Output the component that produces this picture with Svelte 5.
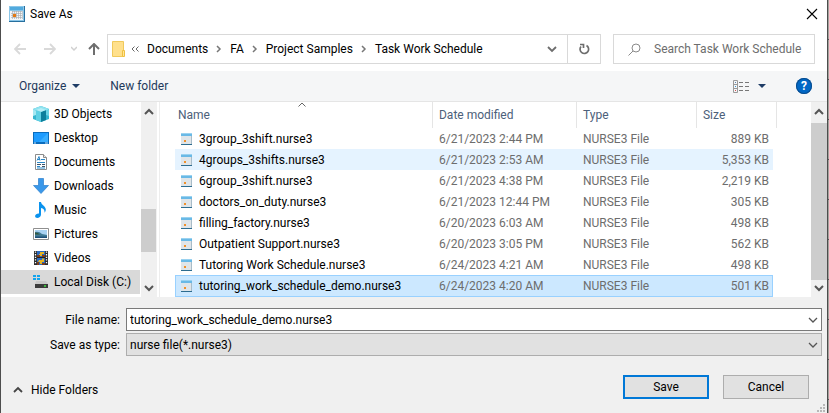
<script>
  const places = [
    { name: '3D Objects', icon: 'cube' },
    { name: 'Desktop', icon: 'desktop' },
    { name: 'Documents', icon: 'document' },
    { name: 'Downloads', icon: 'download' },
    { name: 'Music', icon: 'music' },
    { name: 'Pictures', icon: 'picture' },
    { name: 'Videos', icon: 'video' },
    { name: 'Local Disk (C:)', icon: 'disk' }
  ];
  const crumbs = ['Documents', 'FA', 'Project Samples', 'Task Work Schedule'];
  const files = [
    ['3group_3shift.nurse3', '6/21/2023 2:44 PM', '889 KB'],
    ['4groups_3shifts.nurse3', '6/21/2023 2:53 AM', '5,353 KB'],
    ['6group_3shift.nurse3', '6/21/2023 4:38 PM', '2,219 KB'],
    ['doctors_on_duty.nurse3', '6/21/2023 12:44 PM', '305 KB'],
    ['filling_factory.nurse3', '6/20/2023 6:03 AM', '498 KB'],
    ['Outpatient Support.nurse3', '6/20/2023 3:05 PM', '562 KB'],
    ['Tutoring Work Schedule.nurse3', '6/24/2023 4:21 AM', '498 KB'],
    ['tutoring_work_schedule_demo.nurse3', '6/24/2023 4:20 AM', '501 KB']
  ];
  let place = $state('Local Disk (C:)');
  let selected = $state(7);
  let highlighted = $state(1);
  let fileName = $state('tutoring_work_schedule_demo.nurse3');

  function choose(i) {
    selected = i;
    fileName = files[i][0];
  }
</script>

{#snippet chevron(dir, color, weight)}
  <svg class="chev" width="10" height="10" viewBox="0 0 10 10" fill="none" stroke={color} stroke-width={weight}>
    {#if dir === 'up'}<path d="M1 7 5 3l4 4" />
    {:else if dir === 'down'}<path d="M1 3l4 4 4-4" />
    {:else}<path d="M3 2l3 3-3 3" />{/if}
  </svg>
{/snippet}

{#snippet placeIcon(kind)}
  <svg width="16" height="16" viewBox="0 0 16 16" aria-hidden="true">
    {#if kind === 'cube'}
      <path d="M0 3 8 0l8 3v10l-8 3-8-3z" fill="#35b5cf" />
      <path d="M0 3 8 0l8 3-3 2-5-2-5 2z" fill="#8fe3f0" />
      <path d="M3 4l5 2v10l-5-2z" fill="#5fd0e4" />
      <path d="M8 6l5-2v10l-5 2z" fill="#0e7f9c" />
      <path d="M3 4l5-2 5 2-5 2z" fill="#b5eef6" />
      <path d="M0 3l3 2v4l-3 1z" fill="#a5e8f2" />
      <path d="M13 5l3-2v7l-3-1z" fill="#6bd3e5" />
    {:else if kind === 'desktop'}
      <path d="M0 2h16v12H0z" fill="#0a6cbd" />
      <path d="M1 3h14v9H1z" fill="#1e9cff" />
      <path d="M15 3v9H6z" fill="#38aeff" />
      <path d="M1 13h2M12 13h3" stroke="#bfe3ff" />
    {:else if kind === 'document'}
      <path d="M2.5.5h8l3 3v12h-11z" fill="#fff" stroke="#8b8b8b" />
      <path d="M10.500.5v3h3" fill="#e8e8e8" stroke="#8b8b8b" />
      <path d="M4 6.500l2-4 1 4M5 5.500h2M8 5.500h4M4 8.500h8M4 12.500h3M4 14h8" fill="none" stroke="#2b87c7" />
      <path d="M4 10.500h4M9 10.500h3M9 12.500h3" stroke="#3e5266" />
    {:else if kind === 'download'}
      <path d="M5.500.5h5v7h5L8 15.500.5 7.500h5z" fill="#3a98ea" stroke="#2c80cc" stroke-width=".7" />
    {:else if kind === 'music'}
      <path d="M6 0h2c.3 3 4.500 4 4.800 7.300.1 1.500-.5 2.700-1.300 3.500.4-2.800-1-4.300-3.500-4.800v6.500C8 14.700 6 16 4.300 16 3 16 2 15.200 2.100 14c.2-1.700 2-2.700 3.900-2.500z" fill="#0b93ee" />
    {:else if kind === 'picture'}
      <path d="M.5 2.500h15v11H.5z" fill="#fff" stroke="#8f8f8f" />
      <path d="M2 4h12v8H2z" fill="#a9d2f2" />
      <path d="M2 6q4-1 7 2l5 1v3H2z" fill="#417a95" />
      <path d="M2 6.500q3 0 5 2H2z" fill="#33593f" />
      <path d="M2 10.500h12V12H2z" fill="#1f5079" />
    {:else if kind === 'video'}
      <path d="M1 1h14v14H1z" fill="#2d2d2d" />
      <path d="M4 1h8v14H4z" fill="#2b6ac0" />
      <path d="M2.500 1.500v13M13.500 1.500v13" stroke="#fff" stroke-width="1.300" stroke-dasharray="1.300 1.300" />
      <path d="M4 7.500h8" stroke="#222" />
      <path d="M7 2h4v2H9v2H6V4h1zM6 10h3V8.500h2V12H9v2H7v-2H5z" fill="#e6b422" />
      <path d="M4 5h3v2H4zM4 12h2v3H4zM9 5h3v2H9zM9 13h3v2H9z" fill="#7b3c1c" />
    {:else}
      <path d="M0 1h3v2H0zM4 1h3v2H4zM0 4h3v2H0zM4 4h3v2H4z" fill="#13a5ee" />
      <path d="M3 7h10l2 3H2z" fill="#c9c9c9" />
      <path d="M2 10h13v4H2z" fill="#3b3b3b" />
      <path d="M11 12h2" stroke="#3fe33f" stroke-width="1.500" />
    {/if}
  </svg>
{/snippet}

<div class="screen">
  <div class="window" role="dialog" aria-label="Save As">
    <header class="title">
      <svg width="16" height="16" viewBox="0 0 16 16" aria-hidden="true">
        <path d="M0 0h16v16H0z" fill="#276f9e" />
        <path d="M0 0h15v15H0z" fill="#8bc6e8" />
        <path d="M1 1h13v3H1z" fill="#51aade" />
        <path d="M1 5h13v9H1z" fill="#f5f7f8" />
        <path d="M3 5.500h10M2 7.500h11M2 9.500h11M2 11.500h11M3.500 5v8M5.500 5v8M7.500 5v8M9.500 5v8M11.500 5v8M13.500 5v8" stroke="#a4a9ae" stroke-width=".6" />
        <path d="M4 8h3v3H4z" fill="#e47911" />
      </svg>
      <span>Save As</span>
      <button class="close" aria-label="Close">
        <svg width="12" height="12" viewBox="0 0 12 12" stroke="#000" stroke-width="1.100"><path d="M1 1l10 10M11 1 1 11" /></svg>
      </button>
    </header>

    <nav class="address-row">
      <div class="history">
        <button aria-label="Back"><svg width="12" height="12" viewBox="0 0 12 12" fill="none" stroke="#d9d9d9" stroke-width="1.800"><path d="M12 6H1M6 1 1 6l5 5" /></svg></button>
        <button aria-label="Forward"><svg width="12" height="12" viewBox="0 0 12 12" fill="none" stroke="#d9d9d9" stroke-width="1.800"><path d="M0 6h11M6 1l5 5-5 5" /></svg></button>
        <button class="recent" aria-label="Recent locations"><svg width="6" height="6" viewBox="0 0 6 6" fill="none" stroke="#d0d0d0" stroke-width="1.500"><path d="M0 1l3 3 3-3" /></svg></button>
        <button aria-label="Up"><svg width="12" height="12" viewBox="0 0 12 12" fill="none" stroke="#6e6e6e" stroke-width="2"><path d="M6 12V1M1 6l5-5 5 5" /></svg></button>
      </div>
      <div class="address">
        <svg class="folder" width="13" height="16" viewBox="0 0 13 16" aria-hidden="true">
          <path d="M.5.5h11v15H.5z" fill="#ffe08c" stroke="#f0c95b" />
          <path d="M10.500 9.500h2v6h-2z" fill="#ffe699" stroke="#efc041" />
        </svg>
        <svg class="more" width="8" height="6" viewBox="0 0 8 6" fill="none" stroke="#666" aria-hidden="true"><path d="M3.500.5 1 3l2.500 2.500M7.500.5 5 3l2.500 2.500" /></svg>
        <div class="crumbs">
          {#each crumbs as crumb, i}
            {#if i}{@render chevron('right', '#777', 1.5)}{/if}
            <button>{crumb}</button>
          {/each}
        </div>
        <button class="drop" aria-label="Previous locations">{@render chevron('down', '#6d6d6d', 1.8)}</button>
        <button class="refresh" aria-label="Refresh">
          <svg width="12" height="12" viewBox="0 0 12 12" fill="none" stroke="#6d6d6d" stroke-width="1.700"><path d="M8.500 2.500A4.300 4.300 0 1 1 3 3.500M2 1.500h3.500V5" /></svg>
        </button>
      </div>
      <label class="search">
        <svg width="13" height="13" viewBox="0 0 13 13" fill="none" stroke="#8a8a8a"><circle cx="8" cy="5" r="4" /><path d="M5 8 .5 12.500" /></svg>
        <input type="text" placeholder="Search Task Work Schedule" aria-label="Search Task Work Schedule" />
      </label>
    </nav>

    <div class="toolbar">
      <button class="organize">Organize <svg width="8" height="4" viewBox="0 0 8 4" fill="#1e3c66"><path d="M0 0h8L4 4z" /></svg></button>
      <button>New folder</button>
      <button class="view" aria-label="Change your view">
        <svg width="16" height="13" viewBox="0 0 16 13" fill="none">
          <path d="M.5.5h4v12h-4zM.5 4.500h4M.5 8.500h4" stroke="#9a9a9a" />
          <path d="M6 2.500h4M12 2.500h4M6 6.500h4M12 6.500h4M6 10.500h4M12 10.500h4" stroke="#777" />
          <path d="M2 2.500h1" stroke="#5b87b7" /><path d="M2 6.500h1" stroke="#3398d8" /><path d="M2 10.500h1" stroke="#d45050" />
        </svg>
        <svg width="8" height="4" viewBox="0 0 8 4" fill="#1e3c66"><path d="M0 0h8L4 4z" /></svg>
      </button>
      <button class="help" aria-label="Help">?</button>
    </div>

    <main>
      <ul class="places">
        {#each places as p}
          <li><button class:current={place === p.name} onclick={() => (place = p.name)}>{@render placeIcon(p.icon)}{p.name}</button></li>
        {/each}
      </ul>
      <div class="scroll" aria-hidden="true">
        {@render chevron('up', '#555', 2)}
        <div class="track side"><div class="thumb"></div></div>
        {@render chevron('down', '#555', 2)}
      </div>

      <div class="files">
        <table>
          <colgroup><col /><col class="c-date" /><col class="c-type" /><col class="c-size" /><col class="c-end" /></colgroup>
          <thead>
            <tr>
              <th aria-sort="ascending">Name
                <svg class="sort" width="8" height="5" viewBox="0 0 8 5" fill="none" stroke="#666"><path d="M.5 4.500 4 1l3.500 3.500" /></svg>
              </th>
              <th>Date modified</th><th>Type</th><th colspan="2">Size</th>
            </tr>
          </thead>
          <tbody>
            {#each files as [name, date, size], i}
              <tr class:selected={selected === i} class:hover={highlighted === i} onclick={() => choose(i)} onmouseenter={() => (highlighted = i)}>
                <td class="name">
                  <div>
                    <svg width="11" height="12" viewBox="0 0 11 12" aria-hidden="true">
                      <path d="M0 0h11v12H0z" fill="#dfe5e9" />
                      <path d="M0 0h11v3H0z" fill="#69b9e6" />
                      <path d="M0 0h11v1H0z" fill="#9ad2f0" />
                      <path d="M0 11h11v1H0z" fill="#2d6c8f" />
                      <path d="M10 3h1v8h-1z" fill="#a9bcc8" />
                      <path d="M3 7h2v2H3z" fill="#f0902a" />
                    </svg>{name}
                  </div>
                </td>
                <td>{date}</td><td>NURSE3 File</td><td class="size">{size}</td>
              </tr>
            {/each}
          </tbody>
        </table>
      </div>
      <div class="scroll" aria-hidden="true">
        {@render chevron('up', '#555', 2)}
        <div class="track list"><div class="thumb"></div></div>
        {@render chevron('down', '#555', 2)}
      </div>
    </main>

    <footer>
      <div class="field">
        <label for="file-name">File name:</label>
        <div class="control">
          <input id="file-name" type="text" bind:value={fileName} />
          {@render chevron('down', '#555', 1.3)}
        </div>
      </div>
      <div class="field">
        <label for="file-type">Save as type:</label>
        <div class="control">
          <select id="file-type"><option>nurse file(*.nurse3)</option></select>
          {@render chevron('down', '#555', 1.3)}
        </div>
      </div>
      <div class="actions">
        <button class="hide">{@render chevron('up', '#444', 1.8)}Hide Folders</button>
        <button class="push primary">Save</button>
        <button class="push">Cancel</button>
      </div>
      <svg class="grip" width="8" height="8" viewBox="0 0 8 8" fill="#b8b8b8" aria-hidden="true"><path d="M6 0h2v2H6zM3 3h2v2H3zM6 3h2v2H6zM0 6h2v2H0zM3 6h2v2H3zM6 6h2v2H6z" /></svg>
    </footer>
  </div>
</div>

<style>
  .screen {
    min-height: 100vh;
    display: flex;
    box-sizing: border-box;
    padding-right: 1px;
    background: repeating-linear-gradient(#a5a39d 0 39px, #555 39px 40px);
    font: 12px/16px Roboto, 'Open Sans', sans-serif;
    color: #000;
  }
  .window {
    flex: 1;
    min-width: 0;
    display: flex;
    flex-direction: column;
    background: #fff;
    border: solid #4d4d4d;
    border-width: 0 1px;
  }
  button, input, select { font: inherit; color: inherit; }
  button { background: none; border: 0; padding: 0; white-space: nowrap; }
  svg { display: block; flex: none; }

  .title { display: flex; align-items: center; gap: 5px; height: 28px; padding: 0 9px 0 8px; }
  .close { margin-left: auto; }

  .address-row { display: flex; padding: 6px 12px 7px 13px; height: 30px; }
  .history { display: flex; align-items: center; width: 93px; }
  .history button { margin-right: 18px; }
  .history .recent { margin: 0 11px 0 -3px; }
  .history button:last-child { margin-right: 0; }
  .address { flex: 461; display: flex; align-items: center; border: 1px solid #d9d9d9; min-width: 0; }
  .folder { margin-left: 4px; }
  .more { margin: 0 8px 0 6px; }
  .crumbs { display: flex; align-items: center; gap: 6px; flex: 1; }
  .drop { padding: 0 10px; }
  .refresh { align-self: stretch; width: 33px; border-left: 1px solid #d9d9d9; display: grid; place-items: center; }
  .search { flex: none; width: 200px; margin-left: 12px; display: flex; align-items: center; border: 1px solid #d9d9d9; }
  .search svg { margin: 0 13px 0 14px; }
  .search input { flex: 1; min-width: 0; border: 0; padding: 0; outline: 0; background: none; }
  .search input::placeholder { color: #6d6d6d; opacity: 1; }

  .toolbar { display: flex; align-items: center; height: 30px; padding: 0 15px 0 18px; background: #f5f6f7; border-bottom: 1px solid #e5e5e5; color: #1e395b; }
  .organize { display: flex; align-items: center; gap: 6px; margin-right: 30px; }
  .view { display: flex; align-items: center; gap: 9px; margin-left: auto; margin-right: 30px; }
  .help { width: 16px; height: 16px; border-radius: 50%; background: #0067c5; box-shadow: inset 0 0 0 1px #0a4c8c; color: #fff; font-weight: 700; }

  main { display: flex; height: 195px; }
  .places { list-style: none; margin: 0; padding: 0; width: 140px; }
  .places button { display: flex; align-items: center; gap: 5px; width: 139px; height: 24px; padding-left: 32px; }
  .places .current { background: #d9d9d9; }

  .scroll { width: 16px; background: #f0f0f0; display: flex; flex-direction: column; align-items: center; padding: 5px 0 4px; box-sizing: border-box; }
  .track { flex: 1; width: 100%; padding-top: 6px; box-sizing: border-box; }
  .thumb { background: #cdcdcd; }
  .side .thumb { height: 43px; margin-top: 86px; width: 15px; }
  .list .thumb { height: 157px; }

  .files { flex: 1; min-width: 0; margin-left: 2px; padding-left: 15px; border-left: 1px solid #ededed; }
  table { width: calc(100% - 34px); border-collapse: separate; border-spacing: 0; table-layout: fixed; }
  .c-date { width: 144px; }
  .c-type { width: 120px; }
  .c-size { width: 76px; }
  .c-end { width: 4px; }
  th { height: 26px; padding: 0 6px 0 3px; text-align: left; font-weight: 400; color: #4c607a; border-right: 1px solid #e5e5e5; position: relative; }
  th + th { padding-left: 6px; }
  .sort { position: absolute; top: 0; left: calc(50% - 5px); }
  td { height: 20px; padding: 0 6px; color: #6d6d6d; white-space: nowrap; border: solid transparent; border-width: 1px 0 0; }
  .name { color: #000; }
  .name div { display: flex; align-items: center; gap: 7px; }
  td.size { text-align: right; padding-right: 4px; }
  .hover td { background: #e5f3ff; }
  .selected td { height: 20px; background: #cce8ff; border-color: #99d1ff; border-width: 1px 0; }
  .selected td:first-child { border-left-width: 1px; padding-left: 5px; }
  .selected td:last-child { border-right-width: 1px; padding-right: 3px; }

  footer { flex: 1; position: relative; background: #f0f0f0; padding: 11px 5px 0 12px; }
  .field { display: flex; align-items: center; margin-bottom: 2px; }
  .field label { width: 107px; text-align: right; margin-right: 6px; }
  .control { flex: 1; position: relative; }
  .control input, .control select { display: block; width: 100%; height: 23px; box-sizing: border-box; margin: 0; padding: 0 24px 0 3px; border: 1px solid #7a7a7a; border-radius: 0; outline: 0; background: #fff; appearance: none; }
  .control select { background: #e1e1e1; border-color: #adadad; }
  .control :global(.chev) { position: absolute; right: 4px; top: 7px; pointer-events: none; }
  .actions { display: flex; align-items: center; gap: 14px; margin-top: 19px; padding-right: 13px; }
  .hide { display: flex; align-items: center; gap: 8px; margin: 6px auto 0 0; }
  .push { width: 86px; height: 24px; background: #e1e1e1; border: 1px solid #adadad; }
  .primary { border: 2px solid #0078d7; }
  .grip { position: absolute; right: 2px; bottom: 1px; }
</style>
